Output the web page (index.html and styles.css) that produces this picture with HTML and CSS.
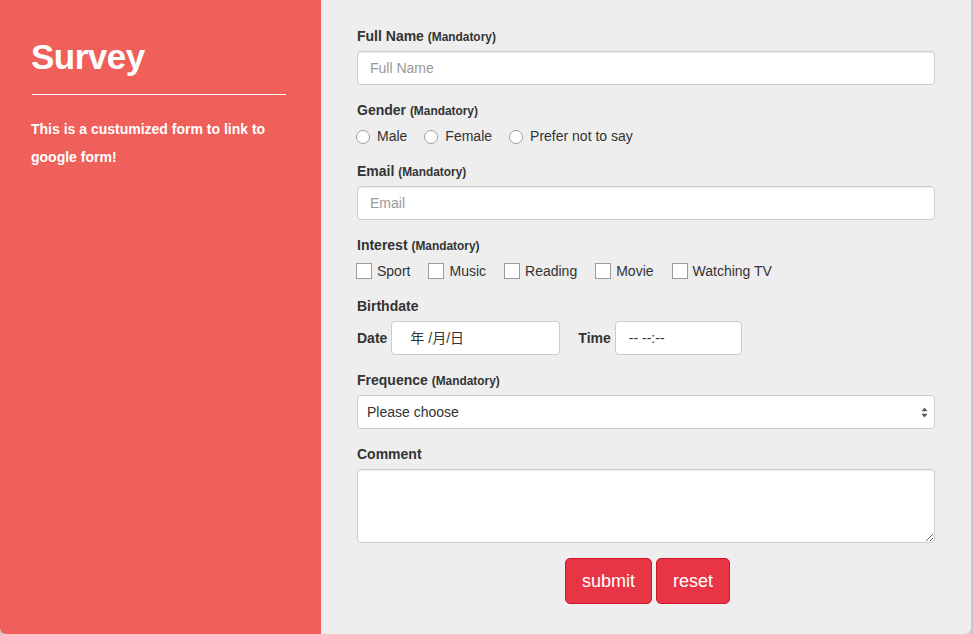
FILE: index.html
```html
<!DOCTYPE html>
<html lang="en">
<head>
<meta charset="utf-8">
<title>Survey</title>
<link rel="stylesheet" href="styles.css">
</head>
<body>
<div class="page">
  <aside class="intro">
    <h1 class="intro-title">Survey</h1>
    <hr class="intro-rule">
    <p class="intro-text">This is a custumized form to link to google form!</p>
  </aside>
  <main class="form-panel">
    <form class="survey-form">
      <div class="group">
        <div class="label">Full Name <small>(Mandatory)</small></div>
        <input class="field" type="text" placeholder="Full Name">
      </div>
      <div class="group">
        <div class="label">Gender <small>(Mandatory)</small></div>
        <div class="choices radios">
          <label class="choice"><span class="radio-mark"></span>Male</label>
          <label class="choice"><span class="radio-mark"></span>Female</label>
          <label class="choice"><span class="radio-mark"></span>Prefer not to say</label>
        </div>
      </div>
      <div class="group">
        <div class="label">Email <small>(Mandatory)</small></div>
        <input class="field" type="text" placeholder="Email">
      </div>
      <div class="group">
        <div class="label">Interest <small>(Mandatory)</small></div>
        <div class="choices checks">
          <label class="choice"><span class="check-mark"></span>Sport</label>
          <label class="choice"><span class="check-mark"></span>Music</label>
          <label class="choice"><span class="check-mark"></span>Reading</label>
          <label class="choice"><span class="check-mark"></span>Movie</label>
          <label class="choice"><span class="check-mark"></span>Watching TV</label>
        </div>
      </div>
      <div class="group">
        <div class="label">Birthdate</div>
        <div class="date-row">
          <span class="inline-label">Date</span>
          <div class="field date-field">年 /月/日</div>
          <span class="inline-label time-label">Time</span>
          <div class="field time-field">-- --:--</div>
        </div>
      </div>
      <div class="group">
        <div class="label">Frequence <small>(Mandatory)</small></div>
        <div class="field select-field">
          <span>Please choose</span>
          <svg class="select-arrows" width="7" height="11" viewBox="0 0 7 11"><path d="M3.5 0.5 L6.5 4.3 L0.5 4.3 Z" fill="#555"/><path d="M3.5 10.5 L6.5 6.7 L0.5 6.7 Z" fill="#555"/></svg>
        </div>
      </div>
      <div class="group">
        <div class="label">Comment</div>
        <textarea class="field comment" rows="3"></textarea>
      </div>
      <div class="actions">
        <button class="btn" type="button">submit</button>
        <button class="btn" type="button">reset</button>
      </div>
    </form>
  </main>
</div>
</body>
</html>
```
FILE: styles.css
```css
* { box-sizing: border-box; }
html, body { margin: 0; padding: 0; }
body {
  background: #c8c8c8;
  font-family: "Liberation Sans", Arial, Helvetica, sans-serif;
  font-size: 14px;
  color: #333;
  width: 973px;
  height: 634px;
  overflow: hidden;
}
.page {
  display: flex;
  width: 971px;
  height: 634px;
  border-radius: 0 0 6px 6px;
  overflow: hidden;
}
.intro {
  width: 321px;
  flex: none;
  background: #ef605a;
  color: #fff;
  padding: 37px 35px 0 32px;
}
.intro-title {
  margin: 0 0 0 -1px;
  font-size: 35px;
  line-height: 39.6px;
  letter-spacing: -0.5px;
  font-weight: bold;
}
.intro-rule {
  margin: 17px 0 0;
  border: 0;
  border-top: 1px solid #fff;
  height: 0;
}
.intro-text {
  margin: 20px 0 0 -1px;
  font-size: 14px;
  font-weight: bold;
  line-height: 28px;
}
.form-panel {
  flex: 1;
  background: #eeeeee;
  padding: 26px 36px 0 36px;
}
.group { margin-bottom: 15px; }
.label {
  font-weight: bold;
  font-size: 14px;
  line-height: 20px;
  height: 20px;
  margin-bottom: 5px;
}
.label small { font-size: 11.9px; line-height: 1; }
.field {
  display: block;
  width: 100%;
  height: 34px;
  padding: 6px 12px;
  font-family: "Liberation Sans", Arial, sans-serif;
  font-size: 14px;
  line-height: 20px;
  color: #333;
  background: #fff;
  border: 1px solid #ccc;
  border-radius: 4px;
  box-shadow: inset 0 1px 1px rgba(0,0,0,.075);
  outline: none;
}
.field::placeholder { color: #999; }
.choices {
  display: flex;
  align-items: center;
  height: 21px;
}
.choice {
  display: flex;
  align-items: center;
  line-height: 20px;
}
.radios .choice { margin-right: 17px; }
.radios .choice:first-child { margin-left: -1px; }
.radio-mark {
  width: 14px;
  height: 14px;
  border-radius: 50%;
  border: 1px solid #a0a0a0;
  background: #fff;
  margin-right: 7px;
  margin-top: 2px;
}
.checks .choice { margin-right: 18px; }
.checks .choice:first-child { margin-left: -1px; }
.check-mark {
  width: 16px;
  height: 16px;
  border: 1px solid #9a9a9a;
  background: #fff;
  margin-right: 5px;
}
.date-row {
  display: flex;
  align-items: center;
}
.inline-label {
  font-weight: bold;
  margin-right: 4px;
}
.time-label { margin-left: 18px; }
.date-field {
  width: 169px;
  padding-left: 18px;
  font-family: "Liberation Sans", "Noto Sans CJK SC", sans-serif;
  box-shadow: none;
}
.time-field {
  width: 127px;
  padding-left: 13px;
  box-shadow: none;
}
.select-field {
  display: flex;
  align-items: center;
  justify-content: space-between;
  padding: 6px 6px 6px 9px;
  box-shadow: none;
}
.select-arrows { display: block; margin-top: 1px; }
.comment {
  height: 74px;
  resize: vertical;
}
.actions {
  display: flex;
  justify-content: center;
  gap: 4px;
  margin-left: 3px;
}
.btn {
  height: 46px;
  padding: 10px 16px;
  font-family: "Liberation Sans", Arial, sans-serif;
  font-size: 18px;
  line-height: 24px;
  color: #fff;
  background: #e83545;
  border: 1px solid #d3142e;
  border-radius: 5px;
}
```
